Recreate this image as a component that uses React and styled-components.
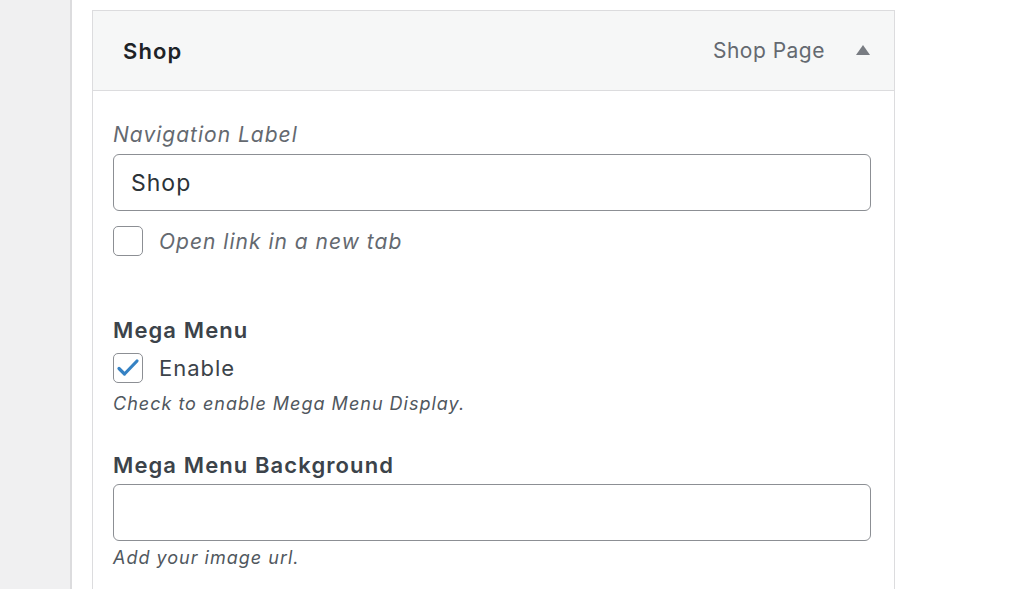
import React from 'react';
import styled, { createGlobalStyle } from 'styled-components';

const GlobalStyle = createGlobalStyle`
  body {
    margin: 0;
    background: #fff;
    font-family: Inter, "Noto Sans", "Liberation Sans", sans-serif;
    color: #3c434a;
  }
`;

const Page = styled.div`
  display: flex;
  height: 589px;
  overflow: hidden;
`;

const Sidebar = styled.div`
  width: 70px;
  flex-shrink: 0;
  background: #f0f0f1;
  border-right: 2px solid #dcdcde;
`;

const Main = styled.div`
  flex: 1;
  padding: 10px 0 0 20px;
`;

const Panel = styled.div`
  width: 801px;
  border: 1px solid #dcdcde;
  border-bottom: none;
  min-height: 600px;
`;

const Header = styled.div`
  display: flex;
  align-items: center;
  height: 79px;
  padding: 0 24px 0 30px;
  background: #f6f7f7;
  border-bottom: 1px solid #dcdcde;
`;

const Title = styled.div`
  flex: 1;
  font-size: 22px;
  font-weight: 600;
  letter-spacing: 1.1px;
  color: #1d2327;
`;

const ItemType = styled.div`
  font-size: 21px;
  letter-spacing: 0.5px;
  color: #646970;
  margin-right: 31px;
`;

const Arrow = styled.span`
  width: 0;
  height: 0;
  border-left: 7.5px solid transparent;
  border-right: 7.5px solid transparent;
  border-bottom: 10px solid #787c82;
  margin-bottom: 2px;
`;

const Body = styled.div`
  padding: 30px 23px 0 20px;
`;

const Field = styled.div`
  display: flex;
  flex-direction: column;
  margin-top: ${(p) => p.$top || 0}px;
`;

const Label = styled.div`
  font-size: ${(p) => (p.$bold ? 22 : 21)}px;
  font-style: ${(p) => (p.$bold ? 'normal' : 'italic')};
  font-weight: ${(p) => (p.$bold ? 600 : 400)};
  letter-spacing: ${(p) => (p.$bold ? 1.1 : 1)}px;
  color: ${(p) => (p.$bold ? '#3c434a' : '#646970')};
  line-height: 28px;
  margin-bottom: ${(p) => p.$below ?? 5}px;
`;

const TextInput = styled.div`
  box-sizing: border-box;
  height: 57px;
  border: 1.5px solid #8c8f94;
  border-radius: 6px;
  padding: 0 17px;
  display: flex;
  align-items: center;
  font-size: 23px;
  letter-spacing: 1px;
  color: #2c3338;
`;

const CheckRow = styled.div`
  display: flex;
  align-items: center;
  gap: 16px;
  margin-top: ${(p) => p.$top || 0}px;
  font-size: ${(p) => (p.$italic ? 21 : 22)}px;
  font-style: ${(p) => (p.$italic ? 'italic' : 'normal')};
  letter-spacing: 1px;
  color: ${(p) => (p.$italic ? '#646970' : '#3c434a')};
`;

const Box = styled.span`
  box-sizing: border-box;
  flex-shrink: 0;
  width: 30px;
  height: 30px;
  border: 1.5px solid #8c8f94;
  border-radius: 5px;
  background: #fff;
  display: flex;
  align-items: center;
  justify-content: center;
`;

const Hint = styled.div`
  font-size: 18px;
  font-style: italic;
  letter-spacing: 1px;
  color: #50575e;
  margin-top: ${(p) => p.$top || 0}px;
`;

const Check = () => (
  <svg width="24" height="24" viewBox="0 0 24 24">
    <path d="M3 12.5l5.5 5.5L21 5" fill="none" stroke="#3582c4" strokeWidth="3.2" strokeLinecap="round" strokeLinejoin="round" />
  </svg>
);

export default function App() {
  return (
    <>
      <GlobalStyle />
      <Page>
        <Sidebar />
        <Main>
          <Panel>
            <Header>
              <Title>Shop</Title>
              <ItemType>Shop Page</ItemType>
              <Arrow />
            </Header>
            <Body>
              <Field>
                <Label>Navigation Label</Label>
                <TextInput>Shop</TextInput>
              </Field>
              <CheckRow $italic $top={15}>
                <Box />
                Open link in a new tab
              </CheckRow>
              <Field $top={60}>
                <Label $bold $below={9}>Mega Menu</Label>
              </Field>
              <CheckRow>
                <Box>
                  <Check />
                </Box>
                Enable
              </CheckRow>
              <Hint $top={10}>Check to enable Mega Menu Display.</Hint>
              <Field $top={37}>
                <Label $bold>Mega Menu Background</Label>
                <TextInput />
              </Field>
              <Hint $top={6}>Add your image url.</Hint>
            </Body>
          </Panel>
        </Main>
      </Page>
    </>
  );
}
